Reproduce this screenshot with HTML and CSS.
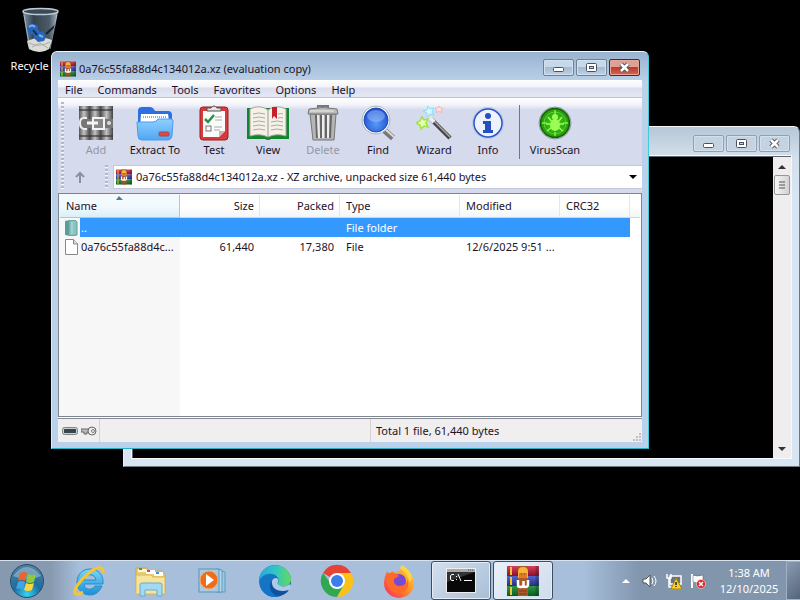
FILE: index.html
```html
<!DOCTYPE html>
<html lang="en">
<head>
<meta charset="utf-8">
<title>Desktop</title>
<link rel="stylesheet" href="styles.css">
</head>
<body>
<svg width="0" height="0" class="defs" aria-hidden="true">
  <defs>
    <linearGradient id="gGrey" x1="0" x2="1"><stop offset="0" stop-color="#555"/><stop offset=".45" stop-color="#c4c4c4"/><stop offset="1" stop-color="#444"/></linearGradient>
    <linearGradient id="gFold" x1="0" x2="0" y1="0" y2="1"><stop offset="0" stop-color="#8fd0ff"/><stop offset="1" stop-color="#4fa6f4"/></linearGradient>
    <radialGradient id="gLens" cx=".5" cy=".65" r=".6"><stop offset="0" stop-color="#5a9bf8"/><stop offset="1" stop-color="#1c4fd0"/></radialGradient>
    <radialGradient id="gVirus"><stop offset="0" stop-color="#43d01c"/><stop offset="1" stop-color="#229a08"/></radialGradient>
    <radialGradient id="gOrb" cx=".5" cy=".9" r=".9"><stop offset="0" stop-color="#35d5f5"/><stop offset=".45" stop-color="#1b6e9f"/><stop offset="1" stop-color="#53809f"/></radialGradient>
    <linearGradient id="gIE" x1="0" x2="0" y1="0" y2="1"><stop offset="0" stop-color="#7bd6fa"/><stop offset="1" stop-color="#1b8fd6"/></linearGradient>
    <linearGradient id="gEdgeA" x1="0" x2="1"><stop offset="0" stop-color="#2aa5dd"/><stop offset=".5" stop-color="#30c5c8"/><stop offset="1" stop-color="#62dc55"/></linearGradient>
    <linearGradient id="gEdgeB" x1="0" x2="1" y1="0" y2="1"><stop offset="0" stop-color="#1890dd"/><stop offset="1" stop-color="#104a9c"/></linearGradient>
    <linearGradient id="gFox" x1="1" x2="0" y1="0" y2="1"><stop offset="0" stop-color="#ffe34a"/><stop offset=".5" stop-color="#ff8a1f"/><stop offset="1" stop-color="#f5256b"/></linearGradient>
    <linearGradient id="gBin" x1="0" x2="1"><stop offset="0" stop-color="#8397a5"/><stop offset=".3" stop-color="#34424e"/><stop offset=".75" stop-color="#4c5b68"/><stop offset="1" stop-color="#a8b8c4"/></linearGradient>
    <linearGradient id="gRed" x1="0" x2="0" y1="0" y2="1"><stop offset="0" stop-color="#d8405a"/><stop offset="1" stop-color="#8c102c"/></linearGradient>
    <linearGradient id="gBlue" x1="0" x2="0" y1="0" y2="1"><stop offset="0" stop-color="#5564cc"/><stop offset="1" stop-color="#262c80"/></linearGradient>
    <linearGradient id="gGreen" x1="0" x2="0" y1="0" y2="1"><stop offset="0" stop-color="#2f9848"/><stop offset="1" stop-color="#075d1c"/></linearGradient>
    <symbol id="rar" viewBox="0 0 32 32">
      <rect x="0" y="1" width="32" height="10" fill="url(#gRed)"/><rect x="0" y="11" width="32" height="10" fill="url(#gBlue)"/><rect x="0" y="21" width="32" height="10" fill="url(#gGreen)"/>
      <path d="M4 2v8M4 12v8M4 22v8" stroke="#efc63a" stroke-width="2"/><path d="M30 1v30" stroke="#222" stroke-opacity=".35" stroke-width="3"/>
      <rect x="11" y="1" width="10" height="30" fill="#a9592a"/><path d="M12 26h8M12 29h8" stroke="#7c3c18"/>
      <path d="M11 7q0-5 5-5t5 5v6H11z" fill="#f6b43c"/><path d="M12 8h8v5h-8z" fill="#e27a22"/><path d="M14 9h1M17 9h1" stroke="#7a3a12"/>
      <path d="M11 15v5q0 2 2.500 2t3-2v-4 4q0 2 2 2t2.500-2v-5" fill="none" stroke="#fff" stroke-width="2.500"/>
    </symbol>
    <symbol id="min" viewBox="0 0 13 11"><rect x="1.5" y="5.5" width="10" height="4" rx="1" fill="#fff" stroke="#4a5260"/></symbol>
    <symbol id="max" viewBox="0 0 13 11"><rect x="1.5" y="1.5" width="10" height="8" rx="1" fill="#fff" stroke="#4a5260"/><rect x="4.500" y="4.500" width="4" height="2" fill="#c5d3e2" stroke="#4a5260"/></symbol>
    <symbol id="close" viewBox="0 0 13 11"><path d="M3 2l7 7M10 2l-7 7" stroke="#454d5c" stroke-width="4.500"/><path d="M3 2l7 7M10 2l-7 7" stroke="#fff" stroke-width="2.500"/></symbol>
  </defs>
</svg>

<main class="desktop">
  <a class="shortcut" href="#">
    <svg width="40" height="48" viewBox="0 0 40 48">
      <path d="M3 5l6 37q11 6 20 0L38 5q-17 6-35 0z" fill="url(#gBin)"/>
      <path d="M7 34l2 8q11 6 20 0l3-9q-12-5-25 1z" fill="#dcdcd6"/><path d="M9 36q10 5 21-1M12 40l8-4 8 5" stroke="#aaa" fill="none"/>
      <path d="M7 21q2-5 7-4 5 1 4 5l2 3 3-1 3 6-2 4-6 1-4-4-1-4-4 1z" fill="#2864b8"/><path d="M9 20q3-3 6 0M19 28l4 2" stroke="#79aef1" stroke-width="2" fill="none"/><path d="M13 23l4 5" stroke="#102a55" stroke-width="2"/>
      <path d="M26 27l10-9" stroke="#15202c" stroke-width="2"/>
      <ellipse cx="20.500" cy="4.500" rx="17.500" ry="3" fill="#3c4a56" stroke="#bccbd7" stroke-width="1.500"/><path d="M4 8l6 34M37 8l-7 34" stroke="#bccbd7" opacity=".7"/>
    </svg>
    <span>Recycle Bin</span>
  </a>

  <section class="window console" aria-label="Console">
    <header class="titlebar">
      <div class="controls">
        <button aria-label="Minimize"><svg width="13" height="11"><use href="#min"/></svg></button>
        <button aria-label="Maximize"><svg width="13" height="11"><use href="#max"/></svg></button>
        <button aria-label="Close"><svg width="13" height="11"><use href="#close"/></svg></button>
      </div>
    </header>
    <div class="console-body">
      <div class="screen"></div>
      <div class="scrollbar">
        <button aria-label="Scroll up"><svg width="8" height="5"><path d="M0 5l4-4 4 4z" fill="#333"/></svg></button>
        <div class="thumb"><svg width="8" height="8"><path d="M1 1h6M1 4h6M1 7h6" stroke="#555"/></svg></div>
        <button class="down" aria-label="Scroll down"><svg width="8" height="5"><path d="M0 0l4 4 4-4z" fill="#333"/></svg></button>
      </div>
    </div>
  </section>

  <section class="window archive" aria-label="Archive">
    <header class="titlebar">
      <svg width="16" height="16"><use href="#rar"/></svg>
      <h1>0a76c55fa88d4c134012a.xz (evaluation copy)</h1>
      <div class="controls">
        <button aria-label="Minimize"><svg width="13" height="11"><use href="#min"/></svg></button>
        <button aria-label="Maximize"><svg width="13" height="11"><use href="#max"/></svg></button>
        <button class="red" aria-label="Close"><svg width="13" height="11"><use href="#close"/></svg></button>
      </div>
    </header>
    <div class="client">
      <nav class="menu">
        <button>File</button><button>Commands</button><button>Tools</button><button>Favorites</button><button>Options</button><button>Help</button>
      </nav>
      <div class="bars">
        <div class="grip"></div>
        <div class="tools">
          <button disabled><svg width="36" height="36" viewBox="0 0 36 36"><rect x="1" y="1" width="11" height="34" fill="url(#gGrey)"/><rect x="12" y="1" width="11" height="34" fill="url(#gGrey)"/><rect x="23" y="1" width="12" height="34" fill="url(#gGrey)"/><path d="M1 5h34M1 31h34" stroke="#333" stroke-width="2" opacity=".6"/><rect x="1" y="14" width="34" height="9" fill="#777"/><path d="M9 13H6q-4 0-4 5t4 6h3" fill="none" stroke="#eee" stroke-width="2"/><rect x="15" y="13" width="11" height="11" fill="#888" stroke="#f4f4f4" stroke-width="2"/><path d="M9 18h11" stroke="#f4f4f4" stroke-width="3"/><circle cx="31" cy="18" r="2" fill="#ddd"/></svg>Add</button>
          <button><svg width="38" height="36" viewBox="0 0 38 36"><path d="M2 6q0-4 4-4h8q3 0 5 4h13q4 0 4 4v18H2z" fill="#2d6fe0"/><path d="M5 9h27l2 14H4z" fill="#fff"/><path d="M7 12h24" stroke="#9ba9c4" stroke-dasharray="1 1" stroke-width="2"/><path d="M1 17h16q3 0 5-3h13q2 0 2 2l-1 15q-1 4-4 4H6q-4 0-4-4z" fill="url(#gFold)" stroke="#4a9cec"/><rect x="23" y="27" width="10" height="4" rx="1" fill="#e0483c" stroke="#9b4d66"/></svg>Extract To</button>
          <button><svg width="30" height="36" viewBox="0 0 30 36"><rect x="1" y="2" width="28" height="33" rx="3" fill="#d63a3c" stroke="#9f2020"/><path d="M4 6h22v20l-6 6H4z" fill="#fbfbfb"/><path d="M26 26h-6v6z" fill="#bbb"/><path d="M8 6V3h4q3-4 6 0h4v3z" fill="#e4e4e4" stroke="#555"/><path d="M6 14l3 3 6-7" fill="none" stroke="#229447" stroke-width="2.500"/><path d="M16 12h7M16 15h7M15 22h8M15 25h6" stroke="#aaa"/><rect x="7" y="21" width="5" height="5" fill="none" stroke="#777"/></svg>Test</button>
          <button><svg width="42" height="36" viewBox="0 0 42 36"><path d="M0 3h42v31H24q-3 2-6 0H0z" fill="#118532"/><path d="M3 4q10-5 18 1 8-6 18-1v27q-10-3-18 1-8-4-18-1z" fill="#f5f1e7" stroke="#a9a697"/><path d="M21 5v27" stroke="#999"/><path d="M6 9q6-2 12 0M6 13q6-2 12 0M6 17q6-2 12 0M6 21q6-2 12 0M6 25q6-2 12 0M31 9q3-1 5 0M31 13q3-1 5 0M24 17q6-2 12 0M24 21q6-2 12 0M24 25q6-2 12 0" stroke="#aaa" fill="none"/><path d="M25 2h5v12l-3-3-2 3z" fill="#c7202c"/></svg>View</button>
          <button disabled><svg width="32" height="36" viewBox="0 0 32 36"><path d="M3 9h26l-2 26H6z" fill="#b5b5b5" stroke="#777"/><path d="M9 10l1 23M14 10v23M19 10v23M24 10l-1 23" stroke="#666" stroke-width="2"/><path d="M11 10l1 23M16 10v23M21 10v23" stroke="#eee" stroke-width="2"/><path d="M11 4V1h10v3" fill="none" stroke="#777" stroke-width="2"/><path d="M2 4q14-3 28 0l1 5H1z" fill="#bbb" stroke="#777"/><path d="M3 6h24" stroke="#eee"/></svg>Delete</button>
          <button><svg width="36" height="36" viewBox="0 0 36 36"><path d="M24 25l9 8" stroke="#777" stroke-width="6"/><path d="M25 24l9 8" stroke="#ddd" stroke-width="2"/><circle cx="16" cy="15" r="14" fill="#f3f5fa" stroke="#a9b4ce"/><circle cx="16" cy="15" r="12" fill="url(#gLens)" stroke="#234ba9"/><ellipse cx="16" cy="11" rx="9" ry="6" fill="#b6d8ff" opacity=".4"/></svg>Find</button>
          <button><svg width="36" height="36" viewBox="0 0 36 36"><path d="M15 14l19 19" stroke="#444" stroke-width="4.500"/><path d="M16 14l18 18" stroke="#aaa" stroke-width="1.500"/><path d="M14 13l4 4" stroke="#eee" stroke-width="4"/><path d="M12 1l2 3 4-1-2 4 2 3-4-1-3 3v-4l-4-2 4-1z" fill="#d8f9ff" stroke="#86dff5"/><path d="M6 12l2 3 4-1-2 4 2 4-4-1-3 3-1-4-4-2 4-2z" fill="#eaffac" stroke="#9be34a" stroke-width="1.500"/><path d="M23 1l1 2h3l-2 2 1 3-3-2-3 2 1-3-2-2h3z" fill="#ffe7e7" stroke="#f9b5b5"/></svg>Wizard</button>
          <button><svg width="34" height="36" viewBox="0 0 34 36"><circle cx="17" cy="18" r="16" fill="#bdc9ea"/><circle cx="17" cy="18" r="14" fill="#edf2fc" stroke="#2c58c4" stroke-width="1.500"/><circle cx="17" cy="11" r="3" fill="#2450c4"/><path d="M12 16h8v9h2v3H12v-3h2v-6h-2z" fill="#2450c4"/></svg>Info</button>
          <div class="divider"></div>
          <button><svg width="34" height="36" viewBox="0 0 34 36"><circle cx="17" cy="18" r="16" fill="#eaf2e7" stroke="#899"/><circle cx="17" cy="18" r="14.500" fill="url(#gVirus)" stroke="#185f0c" stroke-width="1.500"/><circle cx="17" cy="18" r="11" fill="none" stroke="#8df45b" opacity=".5"/><path d="M17 5v5M17 27v4M4 18h5M25 18h5" stroke="#b0ff7a"/><ellipse cx="17" cy="20" rx="5" ry="6" fill="#9cfb57"/><circle cx="17" cy="12" r="3" fill="#9cfb57"/><path d="M10 12l4 5M24 12l-4 5M8 19h18M9 26l5-4M25 26l-5-4" stroke="#9cfb57" stroke-width="1.500"/></svg>VirusScan</button>
        </div>
        <div class="address">
          <button class="up" aria-label="Up one level"><svg width="10" height="12"><path d="M5 12V2M1 6l4-4 4 4" fill="none" stroke="#8d909c" stroke-width="2"/></svg></button>
          <div class="grip"></div>
          <label class="path">
            <svg width="16" height="16"><use href="#rar"/></svg>
            <select aria-label="Path"><option>0a76c55fa88d4c134012a.xz - XZ archive, unpacked size 61,440 bytes</option></select>
            <svg width="8" height="4"><path d="M0 0h8L4 4z"/></svg>
          </label>
        </div>
      </div>
      <div class="list">
        <table>
          <colgroup><col class="c-name"><col class="c-num"><col class="c-num"><col class="c-type"><col class="c-date"><col class="c-crc"><col></colgroup>
          <thead><tr><th class="sorted">Name<svg width="7" height="4"><path d="M0 4l3-4 4 4z" fill="#4e7e94"/></svg></th><th class="num">Size</th><th class="num">Packed</th><th>Type</th><th>Modified</th><th>CRC32</th><th></th></tr></thead>
          <tbody>
            <tr class="selected"><td class="name"><div><svg width="16" height="16" viewBox="0 0 16 16"><path d="M1 1l5-1v16l-5-1z" fill="#579e9e"/><path d="M5 1l6-1 2 2v13l-8 1z" fill="#8bc3c2" stroke="#5f9f9f"/><path d="M8 2v12" stroke="#b9dfdd"/></svg><span>..</span></div></td><td></td><td></td><td>File folder</td><td></td><td></td><td></td></tr>
            <tr><td class="name"><div><svg width="16" height="16" viewBox="0 0 16 16"><path d="M1.500 .5h8L13.500 5v10.500h-12z" fill="#fff" stroke="#888"/><path d="M9.500 .5V5h4" fill="#ddd" stroke="#888"/></svg><span>0a76c55fa88d4c...</span></div></td><td class="num">61,440</td><td class="num">17,380</td><td>File</td><td>12/6/2025 9:51 ...</td><td></td><td></td></tr>
          </tbody>
        </table>
      </div>
      <footer class="status">
        <div class="lights">
          <svg width="16" height="8"><rect x=".5" y=".5" width="15" height="7" rx="2" fill="#c6d0d4" stroke="#788"/><rect x="2" y="2" width="12" height="4" fill="#39454b"/></svg>
          <svg width="16" height="10"><path d="M0 3h8v3H6v2H3V6H0z" fill="#bbb" stroke="#666"/><circle cx="11" cy="5" r="4" fill="#eee" stroke="#666"/><circle cx="12" cy="5" r="1.500" fill="#fff" stroke="#777"/></svg>
        </div>
        <div class="pane"></div>
        <div class="pane total">Total 1 file, 61,440 bytes</div>
        <svg class="size-grip" width="9" height="9"><path d="M6 1h2M3 4h2M6 4h2M0 7h2M3 7h2M6 7h2" stroke="#c5bfbf" stroke-width="2"/></svg>
      </footer>
    </div>
  </section>
</main>

<footer class="taskbar">
  <button class="start" aria-label="Start"><svg width="36" height="36" viewBox="0 0 36 36"><circle cx="18" cy="18" r="16.500" fill="url(#gOrb)" stroke="#254f70"/><path d="M4 13q14-18 28 0-14 7-28 0z" fill="#fff" opacity=".3"/><path d="M11 10q4-2 7 0l-2 8q-4-2-7 0z" fill="#f0622d"/><path d="M19 11q4 2 8 0l-2 8q-4 2-8 0z" fill="#8fc83c"/><path d="M9 19q4-2 7 0l-2 8q-4-3-7-1z" fill="#40a5e6"/><path d="M17 20q4 2 8 0l-2 7q-4 2-8 0z" fill="#fcd33d"/></svg></button>
  <nav class="apps">
    <button aria-label="Internet Explorer"><svg width="32" height="32" viewBox="0 0 32 32"><path fill-rule="evenodd" d="M17 4C9 4 4 10 4 17s5 13 13 13c6 0 10-4 12-9h-7c-3 5-11 4-11-2h19C31 10 25 4 17 4zM11 15c1-7 11-7 12 0z" fill="url(#gIE)" stroke="#258dcd"/><path d="M30 8c1-8-7-6-14 0C7 15-1 26 3 29c2 1 5-1 7-2" fill="none" stroke="#f5c631" stroke-width="3"/></svg></button>
    <button aria-label="File Explorer"><svg width="34" height="32" viewBox="0 0 34 32"><path d="M2 3h11l2 3h13l3 3v18H2z" fill="#e8ce72" stroke="#c6a74c"/><path d="M4 4h8v3H4z" fill="#f7f4df"/><rect x="5" y="3" width="3" height="2" fill="#3ba153"/><rect x="12" y="5" width="9" height="4" fill="#fff"/><rect x="13" y="5" width="3" height="2" fill="#d44"/><rect x="20" y="7" width="9" height="4" fill="#fff"/><rect x="22" y="7" width="3" height="2" fill="#369bcc"/><path d="M2 10h15l2 2h12v17H2z" fill="#f6e49a" stroke="#d5b85c"/><path d="M6 31V20q0-2 2-2h18q2 0 2 2v11h-5v-6H11v6z" fill="#a3d9f2" stroke="#61aed5"/></svg></button>
    <button aria-label="Media Player"><svg width="32" height="30" viewBox="0 0 32 30"><path d="M22 4l6 2v20h-6z" fill="#9cc8e2" stroke="#5d9dc2"/><path d="M19 3l6 1v22h-6z" fill="#b5d8ec" stroke="#5d9dc2"/><rect x="2" y="3" width="20" height="23" fill="#a6cbe2" stroke="#5793b7"/><circle cx="12" cy="14" r="9" fill="#ee6d1d" stroke="#fbaa6d"/><path d="M9 8l8 6-8 6z" fill="#fff"/></svg></button>
    <button aria-label="Edge"><svg width="34" height="34" viewBox="0 0 34 34"><circle cx="17" cy="17" r="16" fill="url(#gEdgeB)"/><path d="M1 16C3-3 30-4 33 15c0 7-7 9-12 6-3-2 1-3-1-7C17 8 6 8 1 16z" fill="url(#gEdgeA)"/><path d="M2 17c4-7 11-8 15-4-6 1-9 12 2 20C9 34 1 27 2 17z" fill="#1475c6"/><path d="M14 17c-1 8 7 12 17 9l2-3-1-3c-4 3-8 3-11 1-3-2 0-3-1-6-2-2-5-1-6 2z" fill="#b0c9e4"/><path d="M14 17c-2 8 7 13 17 9-5 8-18 7-19-3q0-4 2-6z" fill="#114f9f"/></svg></button>
    <button aria-label="Chrome"><svg width="34" height="34" viewBox="0 0 34 34"><path d="M17 17L3 9a16 16 0 0 1 28 0z" fill="#e54335"/><path d="M17 17H9L3 9a16 16 0 0 0 14 24l7-12z" fill="#31a752"/><path d="M17 9h14a16 16 0 0 1-14 24l7-12z" fill="#fbc116"/><circle cx="17" cy="17" r="8" fill="#fff"/><circle cx="17" cy="17" r="6" fill="#3b7de9"/></svg></button>
    <button aria-label="Firefox"><svg width="34" height="34" viewBox="0 0 34 34"><path d="M5 7l2 3 4-3 2 2 5-2 2-6q3 5 6 6 6 6 6 12a15 15 0 0 1-30 0Q2 13 5 7z" fill="url(#gFox)"/><circle cx="17" cy="17" r="7" fill="#7849d3"/><path d="M4 10q7-4 13 2l-5 3q-1 6 5 7 8 0 9-7 2 13-9 14-10 0-12-10z" fill="#ff6a2c"/><path d="M18 4q9 7 9 14l3-3q0-8-10-14z" fill="#ffd542"/></svg></button>
    <button class="open" aria-label="Command Prompt"><svg width="30" height="25" viewBox="0 0 30 25"><rect x=".5" y=".5" width="29" height="24" fill="#aaa" stroke="#eee"/><path d="M22 2h6" stroke="#456" stroke-dasharray="1 1"/><rect x="1" y="4" width="28" height="20" fill="#080808"/><path d="M1 4h28L1 14z" fill="#333"/><path d="M8 6.500H5.500L4.500 8v3l1 1.500H8M10.500 8v1M10.500 11v1M12 6l3 7M18 12.500h8" stroke="#fff" fill="none"/></svg></button>
    <button class="open active" aria-label="Archive manager"><svg width="32" height="32"><use href="#rar"/></svg></button>
  </nav>
  <div class="tray">
    <button aria-label="Hidden icons"><svg width="8" height="5"><path d="M0 5l4-4 4 4z" fill="#fff"/></svg></button>
    <button aria-label="Volume"><svg width="16" height="16" viewBox="0 0 16 16"><path d="M1 6h3l4-4v12l-4-4H1z" fill="#fff" stroke="#555"/><path d="M10 5q2 3 0 6M12 3q4 5 0 10" fill="none" stroke="#fff"/></svg></button>
    <button aria-label="Network"><svg width="16" height="16" viewBox="0 0 16 16"><rect x="4" y="3" width="11" height="8" fill="#657589" stroke="#fff" stroke-width="1.500"/><path d="M1 1v4h4V1M3 5v9h6" fill="none" stroke="#fff" stroke-width="1.500"/><path d="M10 5l6 11H5z" fill="#fbd32b" stroke="#a97e00"/><path d="M10 9v3M10 13v1" stroke="#222" stroke-width="1.500"/></svg></button>
    <button aria-label="Action Center"><svg width="16" height="16" viewBox="0 0 16 16"><path d="M2 1v14" stroke="#fff" stroke-width="2"/><path d="M3 2q4 2 10 0v7q-5 2-10 0z" fill="#fff" stroke="#555" stroke-width=".5"/><circle cx="11" cy="11" r="4.500" fill="#d92626" stroke="#fff" stroke-width=".5"/><path d="M9 9l4 4M13 9l-4 4" stroke="#fff" stroke-width="1.500"/></svg></button>
    <div class="clock"><time>1:38 AM</time><time>12/10/2025</time></div>
    <button class="show" aria-label="Show desktop"></button>
  </div>
</footer>
</body>
</html>
```
FILE: styles.css
```css
* { box-sizing: border-box; }
body {
  margin: 0;
  height: 100vh;
  display: flex;
  flex-direction: column;
  overflow: hidden;
  background: #000;
  color: #1c1228;
  font: 11px/16px "Noto Sans", sans-serif;
}
.defs { position: absolute; }
svg { display: block; flex: none; }
button {
  margin: 0;
  padding: 0;
  border: 0;
  background: none;
  color: inherit;
  font: inherit;
}
.desktop { position: relative; flex: 1; min-height: 0; }

.shortcut {
  position: absolute;
  left: 0;
  top: 7px;
  width: 79px;
  display: flex;
  flex-direction: column;
  align-items: center;
  gap: 3px;
  color: #fff;
  text-decoration: none;
}

.window {
  position: absolute;
  display: flex;
  flex-direction: column;
  border: 1px solid #e9f3fb;
}
.titlebar { display: flex; align-items: center; flex: none; }
.controls { display: flex; gap: 2px; margin-left: auto; padding-bottom: 2px; }
.controls button {
  width: 31px;
  height: 17px;
  display: grid;
  place-items: center;
  border: 1px solid #6d819b;
  border-radius: 2px;
  background: linear-gradient(#c7d8e9 45%, #a4bbd4 50%, #bdd1e6);
  box-shadow: inset 0 0 0 1px #d3e1ee;
}
.controls .red {
  border-color: #5d2228;
  background: linear-gradient(#e0a093 45%, #bd3b2b 50%, #d5684f);
  box-shadow: inset 0 0 0 1px #e3a79b;
}

.console {
  left: 123px;
  right: 0;
  top: 126px;
  bottom: 93px;
  padding: 0 8px 8px;
  border-color: #f4f8fb #70777d #70777d #e8eef4;
  border-radius: 6px 6px 0 0;
  background: linear-gradient(#b7c7d7, #d3dfeb 30px, #d7e4f2 60px);
}
.console .titlebar { height: 29px; padding: 5px 1px 0 0; }
.console .controls button {
  border-color: #8f9fb5;
  background: #c5d2e0;
}
.console-body {
  flex: 1;
  display: flex;
  border: 1px solid #5f666e;
  border-width: 1px 0 0 1px;
  outline: 1px solid #f5f9fd;
}
.screen { flex: 1; background: #000; }
.scrollbar {
  width: 18px;
  padding: 0 1px;
  display: flex;
  flex-direction: column;
  background: #efedee;
}
.scrollbar button { height: 18px; display: grid; place-items: center; }
.scrollbar .down { margin-top: auto; }
.thumb {
  height: 20px;
  display: grid;
  place-items: center;
  border: 1px solid #979797;
  border-radius: 2px;
  background: linear-gradient(90deg, #f6f6f6, #d2d2d4);
}

.archive {
  left: 51px;
  top: 51px;
  width: 598px;
  height: 398px;
  padding: 0 6px 6px;
  border-color: #f0f8ff #42cbd9 #28afc0 #e1edf7;
  border-radius: 6px 6px 0 0;
  background: linear-gradient(#98b3d0, #bcd1e9 30px, #b9d1ea);
}
.archive .titlebar { height: 28px; gap: 3px; padding: 5px 2px 0; }
.titlebar h1 { margin: 0; font-size: 11px; font-weight: 400; }
.client { flex: 1; display: flex; flex-direction: column; min-height: 0; background: #fff; }
.menu {
  display: flex;
  gap: 15px;
  height: 18px;
  padding: 0 7px;
  border-bottom: 1px solid #bfc2d0;
  background: linear-gradient(#fff, #f2f3fa 7px, #dadeee 8px, #e5e8f4);
}
.menu button { line-height: 20px; }
.bars {
  display: grid;
  grid-template-columns: 11px 1fr;
  height: 95px;
  background: linear-gradient(#fff, #f1f3fa 7px, #d5daec 12px);
}
.grip {
  width: 3px;
  margin: 4px 0 3px 3px;
  background: repeating-linear-gradient(#b4b8c8 0 2px, #f7f8fd 2px 3px, transparent 3px 4px);
}
.bars > .grip { grid-row: 1 / 3; }
.tools {
  display: grid;
  grid-template-columns: 54px 64px 54px 54px 56px 54px 58px 50px 12px 60px;
  height: 67px;
  padding-top: 7px;
}
.tools button {
  display: flex;
  flex-direction: column;
  align-items: center;
  gap: 1px;
}
.tools button:disabled { color: #9498a5; }
.divider { width: 1px; height: 54px; margin: 0 0 0 6px; background: #727687; }
.address { display: flex; height: 28px; padding-bottom: 4px; }
.up { width: 22px; display: grid; place-items: center; }
.address .grip { margin: 0 5px 0 14px; }
.path {
  flex: 1;
  display: flex;
  align-items: center;
  gap: 4px;
  padding: 0 5px 0 2px;
  border: 1px solid #c5c8d8;
  border-right: 0;
  background: #fff;
}
.path select {
  flex: 1;
  min-width: 0;
  padding: 0;
  border: 0;
  appearance: none;
  background: none;
  color: inherit;
  font: inherit;
}

.list {
  flex: 1;
  border: 1px solid #7f858f;
  padding: 1px;
  background: linear-gradient(90deg, #f7f7f7 121px, #fff 121px);
}
table { width: 100%; table-layout: fixed; border-collapse: separate; border-spacing: 0; }
.c-name, .c-type { width: 120px; }
.c-num { width: 80px; }
.c-date { width: 100px; }
.c-crc { width: 70px; }
th {
  height: 23px;
  padding: 0 6px;
  border-right: 1px solid #e4e6ea;
  border-bottom: 1px solid #d5d5d5;
  background: linear-gradient(#fff 50%, #f4f5f7);
  font-weight: 400;
  text-align: left;
}
th:last-child { border-right: 0; }
.sorted {
  position: relative;
  border-color: #96d0e8;
  background: linear-gradient(#f3fafd 50%, #daeef8);
}
.sorted svg { position: absolute; left: 56px; top: 1px; }
td { height: 19px; padding: 0 0 0 6px; white-space: nowrap; }
.num { text-align: right; padding-right: 6px; }
thead .num { padding-right: 5px; }
td.name { padding: 0 0 0 4px; }
.name div { display: flex; align-items: center; gap: 1px; }
.name span { flex: 1; }
.selected { color: #fff; }
.selected td { background: #3399ff; }
.selected td.name { background: linear-gradient(90deg, transparent 20px, #3399ff 20px); }
.selected td:last-child { background: none; }

.status {
  display: flex;
  align-items: stretch;
  height: 24px;
  margin-top: 1px;
  border-top: 1px solid #858993;
  background: #f0eeee;
}
.lights { display: flex; align-items: center; gap: 3px; width: 41px; padding-left: 4px; }
.pane { flex: 1; border-left: 1px solid #d5d2d3; }
.total { flex: 0 0 263px; padding-left: 5px; line-height: 24px; }
.size-grip { align-self: flex-end; }

.taskbar {
  display: flex;
  height: 40px;
  border-top: 1px solid #d6e2ef;
  background: linear-gradient(90deg, #8799af, #8799af 50px, #a7bfdb 80px, #a7bfdb 73%, #8195ad 80%, #8195ad);
}
.start { width: 54px; display: grid; place-items: center; }
.apps { display: flex; gap: 2px; padding-left: 5px; }
.apps button { width: 60px; display: grid; place-items: center; }
.apps .open {
  border: 1px solid #3d4d62;
  border-radius: 3px;
  background: linear-gradient(135deg, #d3e0ee, #a9bed6);
  box-shadow: inset 0 0 0 1px #e5eef8;
}
.apps .active { background: linear-gradient(135deg, #e9f0f8, #cfdcec); }
.tray {
  display: flex;
  align-items: center;
  gap: 8px;
  margin-left: auto;
  color: #fff;
}
.tray button { min-width: 16px; display: grid; place-items: center; }
.clock { display: flex; flex-direction: column; width: 70px; text-align: center; }
.tray .show {
  align-self: stretch;
  min-width: 14px;
  margin-left: -6px;
  border: 1px solid #9eb0c6;
  border-right: 0;
  background: linear-gradient(135deg, #8b9cb1, #54657b);
}
```
